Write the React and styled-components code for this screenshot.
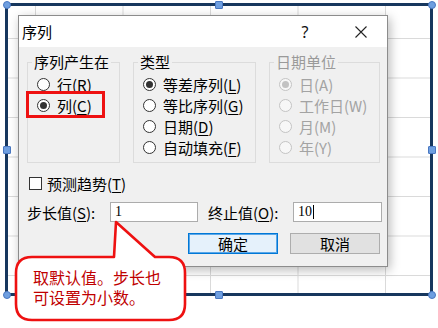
import React from 'react';
import styled, { createGlobalStyle } from 'styled-components';

const GlobalStyle = createGlobalStyle`
  html, body {
    margin: 0;
    padding: 0;
    background: #fff;
  }
  body {
    font-family: "Noto Sans CJK SC", "Noto Sans", sans-serif;
  }
`

const Stage = styled.div`
  position: relative;
  width: 438px;
  height: 328px;
  overflow: hidden;
  box-sizing: border-box;
  padding: 3px 0 0 5px;
  background: #fff;
`

const Sheet = styled.div`
  width: 428px;
  height: 293px;
  box-sizing: border-box;
  border: 3px solid #17375e;
  background-color: #fff;
  background-image:
    linear-gradient(to right, #dadada 1px, transparent 1px),
    linear-gradient(to bottom, #dadada 1px, transparent 1px);
  background-size: 87.5px 100%, 100% 39.5px;
  background-position: 27px 0, 0 32px;
`

const Handle = styled.span`
  position: absolute;
  left: ${p => p.$x - 4}px;
  top: ${p => p.$y - 4}px;
  width: 8px;
  height: 8px;
  box-sizing: border-box;
  background: #6f9fe0;
  border: 1px solid #4a78c2;
  border-radius: ${p => (p.$round ? '50%' : '1px')};
`

const Dialog = styled.div`
  position: absolute;
  left: 18px;
  top: 15px;
  width: 370px;
  height: 252px;
  box-sizing: border-box;
  border: 1px solid #8c8c8c;
  background: #f0f0f0;
  box-shadow: 2px 3px 10px rgba(0, 0, 0, 0.28);
  display: flex;
  flex-direction: column;
  font-family: "Noto Sans CJK SC", sans-serif;
  font-size: 15px;
  color: #000;
`

const TitleBar = styled.div`
  height: 31px;
  display: flex;
  align-items: center;
  background: #fff;
`

const Title = styled.div`
  flex: 1;
  padding-left: 3px;
  font-size: 15px;
`

const TitleButton = styled.div`
  width: ${p => p.$w}px;
  height: 31px;
  display: flex;
  align-items: center;
  justify-content: center;
  font-family: "Noto Sans", sans-serif;
  font-size: 16px;
  color: #111;
`

const Body = styled.div`
  flex: 1;
  display: flex;
  flex-direction: column;
  padding: 6px 0 0 8px;
`

const GroupRow = styled.div`
  display: flex;
  gap: 13px;
`

const Group = styled.fieldset`
  width: ${p => p.$w}px;
  height: 110px;
  box-sizing: border-box;
  margin: 0;
  padding: 0;
  min-width: 0;
  border: 1px solid #dcdcdc;
`

const Legend = styled.legend`
  margin-left: 4px;
  padding: 0 2px;
  line-height: 18px;
  font-size: 15px;
  white-space: nowrap;
  color: ${p => (p.$disabled ? '#9a9a9a' : '#000')};
`

const RadioList = styled.div`
  display: flex;
  flex-direction: column;
  padding: 3px 0 0 9px;
`

const RadioRow = styled.div`
  position: relative;
  width: fit-content;
  height: 21px;
  display: flex;
  align-items: center;
  gap: 7px;
  white-space: nowrap;
  color: ${p => (p.$disabled ? '#a3a3a3' : '#000')};

  ${p => p.$highlight && `
    &::after {
      content: "";
      position: absolute;
      left: -11px;
      right: -13px;
      top: -4px;
      bottom: -2px;
      border: 3px solid #ee1111;
    }
  `}
`

const RadioDot = styled.span`
  position: relative;
  flex: none;
  width: 13px;
  height: 13px;
  box-sizing: border-box;
  border-radius: 50%;
  border: 1px solid ${p => (p.$disabled ? '#c4c4c4' : '#333')};
  background: ${p => (p.$disabled ? '#f7f7f7' : '#fff')};

  ${p => p.$checked && `
    &::after {
      content: "";
      position: absolute;
      left: 2px;
      top: 2px;
      width: 7px;
      height: 7px;
      border-radius: 50%;
      background: ${p.$disabled ? '#c2c2c2' : '#333'};
    }
  `}
`

const Key = styled.span`
  text-decoration: ${p => (p.$plain ? 'none' : 'underline')};
  text-underline-offset: 2px;
`

const CheckRow = styled.div`
  margin-top: 10px;
  height: 20px;
  padding-left: 2px;
  display: flex;
  align-items: center;
  gap: 5px;
`

const CheckBox = styled.span`
  width: 13px;
  height: 13px;
  box-sizing: border-box;
  border: 1px solid #333;
  background: #fff;
`

const FieldRow = styled.div`
  margin-top: 9px;
  height: 20px;
  display: flex;
  align-items: center;
`

const FieldLabel = styled.span`
  width: ${p => p.$w}px;
  margin-left: ${p => p.$gap || 0}px;
`

const TextBox = styled.div`
  width: ${p => p.$w}px;
  height: 20px;
  box-sizing: border-box;
  border: 1px solid #acacac;
  background: #fff;
  padding-left: 4px;
  display: flex;
  align-items: center;
  font-family: "Liberation Serif", serif;
  font-size: 14px;
`

const Caret = styled.span`
  width: 1px;
  height: 14px;
  margin-left: 1px;
  background: #000;
`

const ButtonRow = styled.div`
  margin-top: 11px;
  padding-right: 7px;
  display: flex;
  justify-content: flex-end;
  gap: 12px;
`

const Button = styled.div`
  width: 90px;
  height: 21px;
  box-sizing: border-box;
  display: flex;
  align-items: center;
  justify-content: center;
  border: 1px solid ${p => (p.$primary ? '#0078d7' : '#adadad')};
  box-shadow: ${p => (p.$primary ? 'inset 0 0 0 1px #5aa7e8' : 'none')};
  background: ${p => (p.$primary ? '#e5f1fb' : '#e1e1e1')};
  font-size: 15px;
`

const Callout = styled.div`
  position: absolute;
  left: 14px;
  top: 220px;
  width: 174px;
  height: 103px;
`

const CalloutShape = styled.svg`
  position: absolute;
  left: 0;
  top: 0;
  overflow: visible;
`

const CalloutText = styled.div`
  position: relative;
  padding: 47px 0 0 19px;
  font-family: "Noto Sans CJK SC", sans-serif;
  font-size: 16px;
  line-height: 20px;
  color: #c00000;
`

const Radio = ({ label, k, checked, disabled, highlight }) => (
  <RadioRow $disabled={disabled} $highlight={highlight}>
    <RadioDot $checked={checked} $disabled={disabled} />
    <span>
      {label}(<Key $plain={disabled}>{k}</Key>)
    </span>
  </RadioRow>
)

const handles = [
  { x: 6.5, y: 4.5, round: true },
  { x: 219, y: 4.5 },
  { x: 431.5, y: 4.5, round: true },
  { x: 6.5, y: 150 },
  { x: 431.5, y: 150 },
  { x: 6.5, y: 294.5, round: true },
  { x: 219, y: 294.5 },
  { x: 431.5, y: 294.5, round: true },
]

export default function App() {
  return (
    <>
      <GlobalStyle />
      <Stage>
        <Sheet />
        {handles.map((h, i) => (
          <Handle key={i} $x={h.x} $y={h.y} $round={h.round} />
        ))}

        <Dialog>
          <TitleBar>
            <Title>序列</Title>
            <TitleButton $w={60}>?</TitleButton>
            <TitleButton $w={52}>
              <svg width="12" height="12" viewBox="0 0 12 12">
                <path d="M0.5 0.5 L11.5 11.5 M11.5 0.5 L0.5 11.5" stroke="#222" strokeWidth="1.1" fill="none" />
              </svg>
            </TitleButton>
          </TitleBar>

          <Body>
            <GroupRow>
              <Group $w={93}>
                <Legend>序列产生在</Legend>
                <RadioList>
                  <Radio label="行" k="R" />
                  <Radio label="列" k="C" checked highlight />
                </RadioList>
              </Group>
              <Group $w={123}>
                <Legend>类型</Legend>
                <RadioList>
                  <Radio label="等差序列" k="L" checked />
                  <Radio label="等比序列" k="G" />
                  <Radio label="日期" k="D" />
                  <Radio label="自动填充" k="F" />
                </RadioList>
              </Group>
              <Group $w={111}>
                <Legend $disabled>日期单位</Legend>
                <RadioList>
                  <Radio label="日" k="A" checked disabled />
                  <Radio label="工作日" k="W" disabled />
                  <Radio label="月" k="M" disabled />
                  <Radio label="年" k="Y" disabled />
                </RadioList>
              </Group>
            </GroupRow>

            <CheckRow>
              <CheckBox />
              <span>预测趋势(<Key>T</Key>)</span>
            </CheckRow>

            <FieldRow>
              <FieldLabel $w={83}>步长值(<Key>S</Key>):</FieldLabel>
              <TextBox $w={88}>1</TextBox>
              <FieldLabel $w={85} $gap={10}>终止值(<Key>O</Key>):</FieldLabel>
              <TextBox $w={89}>10<Caret /></TextBox>
            </FieldRow>

            <ButtonRow>
              <Button $primary>确定</Button>
              <Button>取消</Button>
            </ButtonRow>
          </Body>
        </Dialog>

        <Callout>
          <CalloutShape width="174" height="103" viewBox="0 0 174 103">
            <path
              d="M18 37 L100 37 L102 2 L141 37 L155 37 Q171 37 171 53 L171 84 Q171 100 155 100 L18 100 Q2 100 2 84 L2 53 Q2 37 18 37 Z"
              fill="#fff"
              stroke="#ee1111"
              strokeWidth="2.6"
              strokeLinejoin="round"
            />
          </CalloutShape>
          <CalloutText>
            取默认值。步长也<br />可设置为小数。
          </CalloutText>
        </Callout>
      </Stage>
    </>
  );
}
